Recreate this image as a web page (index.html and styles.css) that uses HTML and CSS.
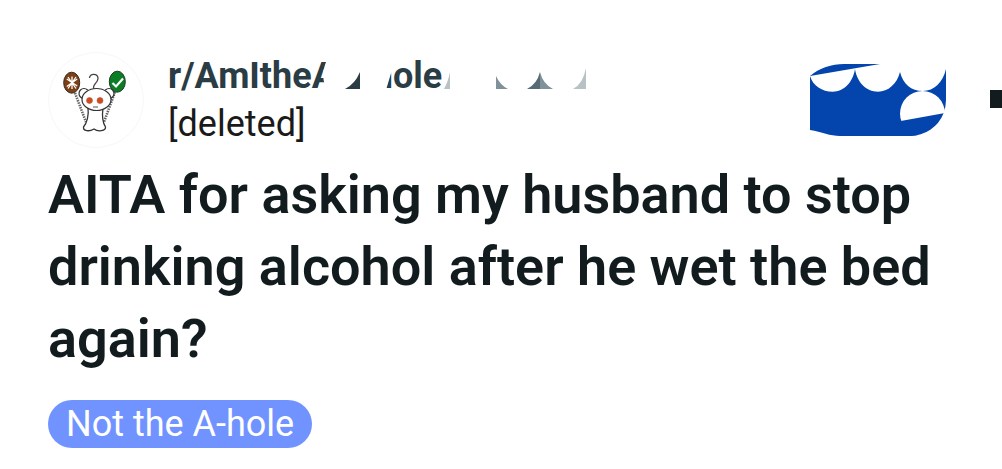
FILE: index.html
```html
<!DOCTYPE html>
<html lang="en">
<head>
<meta charset="utf-8">
<title>AITA post</title>
<link rel="stylesheet" href="styles.css">
</head>
<body>
<main class="post">
  <header class="head">
    <svg class="avatar" viewBox="0 0 96 96" aria-hidden="true">
      <circle cx="48" cy="48" r="47.5" fill="#fff" stroke="#f7f7f7"/>
      <path d="M27 41L38 70M67 40L56 70" stroke="#666" stroke-width="2.600" stroke-dasharray="1.500 1" fill="none"/>
      <ellipse cx="23.700" cy="30.700" rx="8" ry="10.500" fill="#7d3f16" stroke="#3a2a20"/>
      <path d="M24 24.500v12.500M18.800 27l10.400 7M18.800 34.500l10.400-7.500M20 25l8 11.500M28 25l-8 11.500" stroke="#fff" stroke-width="1.300"/>
      <ellipse cx="69.300" cy="29.700" rx="8" ry="10.500" fill="#0a7d25" stroke="#1c3a22"/>
      <path d="M64.500 31l3.500 3.500 7-8" stroke="#fff" stroke-width="2.200" fill="none"/>
      <path d="M46 37C43.500 33 50 31 50 26.500C50 21 41.500 21 41.500 26" stroke="#444" stroke-width="1.300" fill="none"/>
      <path d="M40 56C41 63 39 71 35.500 75C35 79 41 80 46 77C50 80 58 79 57.500 75C55 71 54 63 55 56Z" fill="#fff" stroke="#333" stroke-width="1.300"/>
      <circle cx="36" cy="41.500" r="5" fill="#fff" stroke="#333" stroke-width="1.200"/>
      <circle cx="61" cy="41.500" r="5" fill="#fff" stroke="#333" stroke-width="1.200"/>
      <ellipse cx="48.500" cy="47.500" rx="14.500" ry="11" fill="#fff" stroke="#333" stroke-width="1.200"/>
      <circle cx="41.500" cy="48.500" r="3" fill="#d4481c" stroke="#a8623f" stroke-width=".6"/>
      <circle cx="52" cy="48.500" r="3" fill="#d4481c" stroke="#a8623f" stroke-width=".6"/>
      <path d="M45 55h5" stroke="#555" fill="none"/>
    </svg>
    <div class="who">
      <div class="sub">r/AmItheAsshole
        <svg class="sub-mask" viewBox="300 56 300 40" aria-hidden="true">
          <path class="mask" d="M326 56V62C322 72 322 82 328 90V96H386L386 90L392 70V56Z"/>
          <path class="frag-dark" d="M345 89Q355 84 360 72V89Z"/>
          <path class="frag-pale" d="M450 72V89H444Q448 82 450 72Z"/>
          <path class="frag-mid" d="M496 76V89H508Q500 85 496 76Z"/>
          <path class="frag-deep" d="M527 89Q537 84 540 72V89Z"/>
          <path class="frag-mid" d="M540 72Q543 84 553 89H540Z"/>
          <path class="frag-pale" d="M573 89Q583 84 586 68V89Z"/>
        </svg>
      </div>
      <div class="author">[deleted]</div>
    </div>
    <svg class="join" viewBox="0 0 136 72" aria-hidden="true">
      <path class="blue" d="M0 12C9 4 22 0 34 0H136V36A36 36 0 0 1 100 72H30C20 72 12 68 0 66Z"/>
      <path class="hole" d="M0 12C3 22 12 27.700 22.700 27.700C34 27.700 43 18 45 5C47 18 56 27.700 68 27.700C78 27.700 87 20 90 8C93 20 101 27 113 27C124 27 133 18 136 5V0H70Z"/>
      <circle class="hole" cx="112.500" cy="49.500" r="22.500"/>
      <path class="blue" d="M88 57.400L133.600 49.300A36 36 0 0 1 100 72H88Z"/>
    </svg>
    <span class="dot"></span>
  </header>
  <h1 class="title">AITA for asking my husband to stop drinking alcohol after he wet the bed again?</h1>
  <span class="flair">Not the A-hole</span>
</main>
</body>
</html>
```

FILE: styles.css
```css
* { box-sizing: border-box; }
html, body { margin: 0; background: #fff; }
body { width: 1002px; height: 469px; overflow: hidden; font-family: Roboto, sans-serif; }
.post { padding: 52px 0 0 48px; }
.head { display: flex; align-items: flex-start; height: 96px; }
.avatar { width: 96px; height: 96px; flex: none; }
.who { margin-left: 24px; flex: none; width: 440px; margin-top: 1px; }
.sub { position: relative; font-size: 36px; line-height: 46px; font-weight: 700; color: #2a3c44; white-space: nowrap; }
.sub-mask { position: absolute; left: 132px; top: 3px; width: 300px; height: 40px; }
.mask { fill: #fff; }
.frag-dark { fill: #2a3c44; }
.frag-deep { fill: #566b76; }
.frag-mid { fill: #7f9199; }
.frag-pale { fill: #b8c1c4; }
.author { margin-top: 2px; font-size: 36px; line-height: 46px; color: #1a1a1a; }
.join { width: 136px; height: 72px; flex: none; margin: 12px 0 0 202px; }
.blue { fill: #0345ad; }
.hole { fill: #fff; }
.dot { width: 12px; height: 18px; flex: none; margin: 38px 0 0 44px; background: #121c1e; }
.title { margin: 11px 0 0; width: 930px; font-size: 54px; line-height: 72px; font-weight: 600; color: #121c1e; }
.flair { display: inline-block; margin-top: 25px; height: 48px; padding: 0 18px; border-radius: 24px; background: #7193ff; color: #fff; font-size: 36px; line-height: 48px; }
```
